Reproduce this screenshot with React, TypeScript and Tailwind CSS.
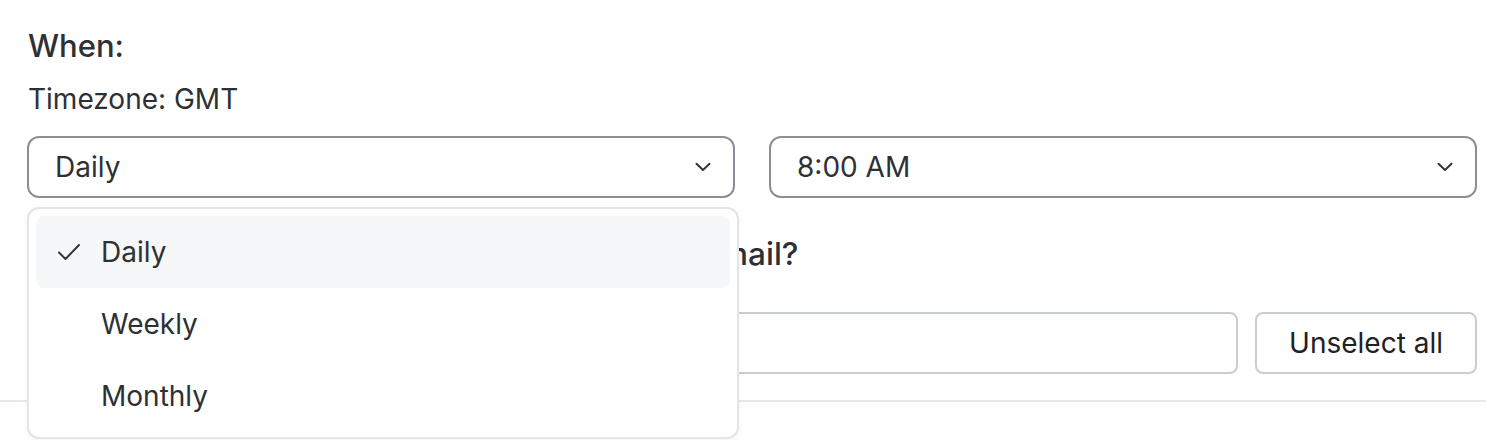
import React from "react";

function Chevron() {
  return (
    <svg width="16" height="10" viewBox="0 0 16 10" fill="none">
      <path d="M1.5 1.8 L8 8 L14.5 1.8" stroke="#33353a" strokeWidth="2" strokeLinecap="round" strokeLinejoin="round" />
    </svg>
  );
}

function Check() {
  return (
    <svg width="24" height="18" viewBox="0 0 24 18" fill="none">
      <path d="M2 9.5 L8.5 16 L22 2" stroke="#33353a" strokeWidth="2" strokeLinecap="round" strokeLinejoin="round" />
    </svg>
  );
}

export default function App() {
  return (
    <div className="relative w-[1486px] h-[440px] overflow-hidden bg-white font-['Inter','Liberation_Sans',sans-serif] text-[#2e3034]">
      <div className="pl-[27px] pr-[9px] pt-[26px]">
        <h2 className="text-[31px] leading-[40px] font-medium pl-px">When:</h2>
        <p className="mt-[15px] text-[28px] leading-[36px] pl-px">Timezone: GMT</p>
        <div className="mt-[19px] grid grid-cols-2 gap-[34px]">
          <div className="relative">
            <div className="h-[62px] rounded-[12px] border-2 border-[#8b8f97] flex items-center justify-between pl-[26px] pr-[22px] text-[28px]">
              <span>Daily</span>
              <Chevron />
            </div>
            <div className="absolute z-10 left-0 top-[71px] w-[712px] rounded-[12px] border-2 border-[#e4e5e9] bg-white px-[7px] pt-[7px] pb-[5px] shadow-[0_2px_6px_rgba(0,0,0,0.05)]">
              <div className="h-[72px] rounded-[8px] bg-[#f6f7f9] flex items-center pl-[21px] text-[28px]">
                <span className="w-[44px] flex"><Check /></span>
                <span>Daily</span>
              </div>
              <div className="h-[72px] flex items-center pl-[65px] text-[28px]">Weekly</div>
              <div className="h-[72px] flex items-center pl-[65px] text-[28px]">Monthly</div>
            </div>
          </div>
          <div className="h-[62px] rounded-[12px] border-2 border-[#8b8f97] flex items-center justify-between pl-[26px] pr-[22px] text-[28px]">
            <span>8:00 AM</span>
            <Chevron />
          </div>
        </div>
        <h2 className="mt-[36px] text-[31.5px] leading-[40px] font-medium pl-px whitespace-nowrap">Who would you like to receive this report via email?</h2>
        <div className="mt-[38px] flex gap-[17px]">
          <div className="flex-1 h-[62px] rounded-[8px] border-2 border-[#c9ccd2]" />
          <button className="w-[222px] h-[62px] rounded-[8px] border-2 border-[#c9ccd2] bg-white text-[28px] text-[#1f2124] flex items-center justify-center">
            Unselect all
          </button>
        </div>
      </div>
      <div className="mt-[26px] border-t-2 border-[#e5e7eb]" />
    </div>
  );
}
